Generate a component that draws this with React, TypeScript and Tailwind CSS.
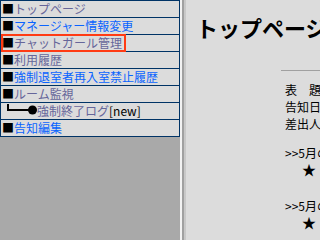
import React from 'react';

type MenuItem = {
  label: string;
  visited?: boolean;
  focused?: boolean;
  sub?: boolean;
  isNew?: boolean;
};

const menu: MenuItem[] = [
  { label: 'トップページ', visited: true },
  { label: 'マネージャー情報変更' },
  { label: 'チャットガール管理', visited: true, focused: true },
  { label: '利用履歴', visited: true },
  { label: '強制退室者再入室禁止履歴' },
  { label: 'ルーム監視', visited: true },
  { label: '強制終了ログ', visited: true, sub: true, isNew: true },
  { label: '告知編集' },
];

const font = "[font-family:'Noto_Sans_CJK_JP','Noto_Sans',sans-serif]";

// ┗━● の枝線
const Branch = () => (
  <svg width="35" height="16" viewBox="0 0 35 16" className="shrink-0">
    <rect x="5" y="1" width="2" height="7" fill="#000" />
    <rect x="5" y="6" width="22" height="2" fill="#000" />
    <circle cx="30.5" cy="7" r="4.5" fill="#000" />
  </svg>
);

const MenuRow = ({ item }: { item: MenuItem }) => {
  const linkColor = item.visited ? 'text-[#66669a]' : 'text-[#0a64ff]';
  return (
    <div className="flex h-[17px] items-center border-b border-[#003366] bg-[#dcdcdc] pl-[1px] text-[12px] leading-[16px] whitespace-nowrap">
      {item.sub ? (
        <>
          <Branch />
          <a className={linkColor}>{item.label}</a>
          <span className="text-black">[new]</span>
        </>
      ) : (
        <a
          className={`flex h-[16px] items-center pr-[3px] ${
            item.focused ? 'outline-2 -outline-offset-1 outline-[#ff3b14]' : ''
          }`}
        >
          <span className="text-black">■</span>
          <span className={linkColor}>{item.label}</span>
        </a>
      )}
    </div>
  );
};

export default function App() {
  return (
    <div className={`flex h-[240px] w-[320px] overflow-hidden ${font}`}>
      {/* left frame */}
      <div className="w-[180px] shrink-0 bg-[#a9a9a9]">
        <div className="w-[180px] border-x border-t border-[#003366]">
          {menu.map((item, i) => (
            <MenuRow key={i} item={item} />
          ))}
        </div>
      </div>

      {/* frame border */}
      <div className="flex shrink-0">
        <div className="w-[2px] bg-[#f2f2f2]" />
        <div className="w-[2px] bg-[#a0a0a0]" />
        <div className="w-[2px] bg-[#c8c8c8]" />
      </div>

      {/* right frame */}
      <div className="min-w-0 flex-1 overflow-hidden bg-[#dcdcdc] text-black">
        <h1 className="pl-[10px] pt-[14px] text-[22px] font-bold leading-[26px] whitespace-nowrap">
          トップページ
        </h1>
        <div className="ml-[95px] mt-[30px] w-[420px]">
          <div className="h-px bg-[#a0a0a0]" />
          <div className="mt-[10px] pl-[4px] text-[12px] leading-[17px] whitespace-nowrap">
            <div className="h-[17px]">表　題　：お知らせ</div>
            <div className="h-[17px]">告知日時：2024/05/01</div>
            <div className="h-[17px]">差出人　：運営事務局</div>
          </div>
          <div className="mt-[13px] pl-[4px] text-[12px] leading-[16px] whitespace-nowrap">
            <div>&gt;&gt;5月のお知らせ</div>
            <div className="pl-[17px] text-[14px]">★</div>
            <div className="mt-[21px]">&gt;&gt;5月のキャンペーン</div>
            <div className="pl-[17px] text-[14px]">★</div>
          </div>
        </div>
      </div>
    </div>
  );
}
